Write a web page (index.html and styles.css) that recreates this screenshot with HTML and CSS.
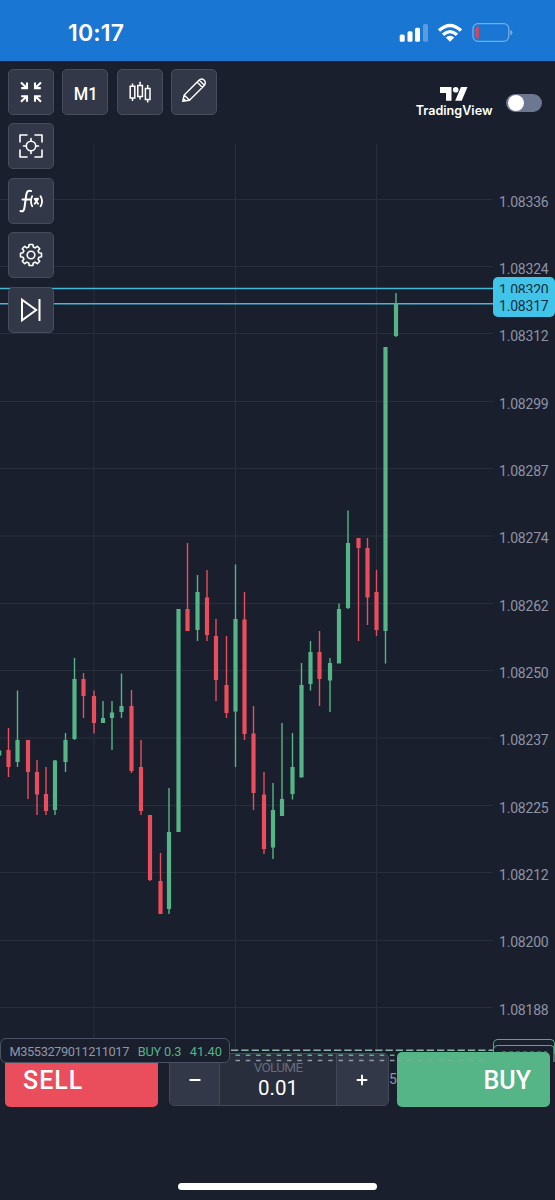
FILE: index.html
```html
<!DOCTYPE html>
<html lang="en">
<head>
<meta charset="utf-8">
<meta name="viewport" content="width=device-width, initial-scale=1">
<title>EURUSD chart</title>
<link rel="stylesheet" href="styles.css">
</head>
<body>
<div class="screen">
  <header class="status">
    <span class="clock">10:17</span>
    <svg class="status-icons" width="120" height="24" viewBox="396 21 120 24">
      <g fill="#fff">
        <rect x="399.700" y="34.500" width="5" height="7.200" rx="1.500"/>
        <rect x="407.500" y="31.300" width="5" height="10.400" rx="1.500"/>
        <rect x="415" y="27.800" width="5" height="13.900" rx="1.500"/>
        <rect x="423" y="24" width="5" height="17.700" rx="1.500" opacity=".28"/>
        <path d="M450 41.700 445.700 37.400Q450 34.100 454.300 37.400Z"/>
      </g>
      <g fill="none" stroke="#fff" stroke-width="3.300">
        <path d="M439 30.500Q450 20.300 461 30.500"/>
        <path d="M443 34.800Q450 28.500 457 34.800"/>
      </g>
      <rect x="473" y="23.700" width="35.800" height="17.600" rx="5" fill="none" stroke="#76ade6" stroke-width="1.300"/>
      <path d="M510.300 30Q512.500 30.600 512.500 32.600T510.300 35.200Z" fill="#76ade6"/>
      <path d="M478.700 26.300V38.700Q475.300 38.500 475.300 35.500V29.500Q475.300 26.500 478.700 26.300Z" fill="#ef3e46"/>
    </svg>
  </header>

  <main class="chart">
    <svg class="plot" width="555" height="1001" viewBox="0 61 555 1001">
      <path class="grid" d="M0 199.500H493M0 266.500H493M0 333.500H493M0 401.500H493M0 468.500H493M0 536H493M0 603.500H493M0 670.500H493M0 738H493M0 805.500H493M0 872.500H493M0 940.500H493M0 1007.500H493M94 144V1052M235.500 144V1052M376.500 144V1052"/>
      <path class="quote" d="M0 288.500H494M0 303.700H494"/>
      <path class="wick up" d="M17.500 690.500V767M55 760V815M65.500 733V772M74.500 658V740M103 701V723M112 701V750M121.500 673.500V718M169 788V914M197.500 575V641M235.500 564.500V767M273 783V859M282 723V816M292.500 733V799.500M301.500 663V777M310.500 641V690.500M330 658V712M339 603.500V663M348 510.500V609M385.500 347V663.500M396 293V337"/>
      <path class="wick down" d="M8.500 728V777M28 740V799M37 760V815M46 767V815M83.500 673V718M94 690.500V733.500M131.500 690V773M141 740V815M150 815V881M160.500 853V914M187.500 543V631M207 570V641M216 619V701M226.500 636V718M244.500 592V740M253.500 706V810M264 772V854M319.500 631V706M358.500 538V641M367.500 538V625M376.500 570V636"/>
      <path class="bar up" d="M-.8 750.500V755.500M17.500 740V762M55 760.500V810M65.500 740V762M74.500 679V739M103 718V723M112 712.500V718M121.500 706V712M169 832V909M178.500 609V832M197.500 592V630M235.500 619V711.500M273 810V847.500M282 799V816M292.500 767V794M301.500 685V777.500M310.500 652V684M330 663V680.500M339 609V663.500M348 543V608M385.500 347V631M396 304V336"/>
      <path class="bar down" d="M8.500 750V767M28 740V772M37 772V794.500M46 794V811M83.500 679V696M94 696V723M131.500 706V771M141 767V811M150 815V880M160.500 881V914M187.500 609V631M207 597.500V635M216 636V680M226.500 685V713M244.500 619.500V734M253.500 733.500V793M264 794.500V849M319.500 652V679M358.500 538V548M367.500 548V597.500M376.500 592V630"/>
    </svg>

    <div class="toolbar">
      <div class="tool-row">
        <button class="tool" aria-label="Collapse">
          <svg width="24" height="24" viewBox="-12 -12 24 24" fill="none" stroke="#fff" stroke-width="2.100"><path d="M-10-9.500-4.300-4M-9.800-3.900H-4V-9.500M10-9.500 4.300-4M9.800-3.900H4V-9.500M-10 9.800-4.300 4.300M-9.800 4.200H-4V9.800M10 9.800 4.300 4.300M9.800 4.200H4V9.800"/></svg>
        </button>
        <button class="tool period"><span>M1</span></button>
        <button class="tool" aria-label="Chart type">
          <svg width="24" height="24" viewBox="-12 -12 24 24" fill="none" stroke="#fff" stroke-width="1.500"><path d="M-9.800-5.800H-5.200V6H-9.800ZM-7.500-8.500V-5.800M-7.500 6V9M-2.200-6.500H2.400V4.500H-2.200ZM.1-10.300V-6.500M.1 4.500V7.500M5.400-3.500H10V7.500H5.400ZM7.700-7V-3.500M7.700 7.500V10.500"/></svg>
        </button>
        <button class="tool" aria-label="Draw">
          <svg class="pencil" width="26" height="26" viewBox="-13 -13 26 26" fill="none" stroke="#fff" stroke-width="1.400" stroke-linejoin="round"><path d="M-11.300 11.200-9.800 5 4.700-9.600Q7.500-12.300 10-9.900T10.300-4.500L-4.500 10.200-11.300 11.200ZM-9.800 5-4.500 10.200M3-8 8.500-2.500M5.100-9.900 10.600-4.400M-10.700 8.600-8.700 10.600"/></svg>
        </button>
      </div>
      <button class="tool" aria-label="Crosshair">
        <svg width="26" height="26" viewBox="-13 -13 26 26" fill="none" stroke="#fff" stroke-width="1.600" stroke-linecap="round" stroke-linejoin="round"><path d="M-11-4V-11H-4M4-11H11V-4M11 4V11H4M-4 11H-11V4M0-7.500V-4.800M0 4.800V7.500M-7.500 0H-4.800M4.800 0H7.500"/><circle r="4.700"/></svg>
      </button>
      <button class="tool" aria-label="Indicators">
        <svg width="26" height="26" viewBox="-13 -13 26 26" fill="none" stroke="#fff" stroke-width="2" stroke-linecap="round"><path d="M0-10Q-3.700-11.500-4.700-6.500L-6.500 6.500Q-7.200 11.500-10.500 10M-8.500-1.500H-1"/><path stroke-width="1.800" d="M1.200-4.800Q-1.200 .2 1.200 5.200M9.600-4.800Q12.600 .2 9.600 5.200M3.700-2 7-2.300M3.700-2 7 2.700M7-2 3.700 2.700"/></svg>
      </button>
      <button class="tool" aria-label="Settings">
        <svg width="26" height="26" viewBox="-13 -13 26 26" fill="none" stroke="#fff" stroke-width="1.600" stroke-linejoin="round"><path d="M-1.800-10.500H1.800L2.400-8Q3.300-7.600 4.100-7.100L6.300-8.700 8.700-6.300 7.100-4.100 8-2.200 10.500-1.800V1.800L8 2.300 7.100 4.100 8.700 6.300 6.300 8.700 4.100 7.100 2.300 8 1.800 10.500H-1.800L-2.300 8-4.100 7.100-6.300 8.700-8.700 6.300-7.100 4.100-8 2.300-10.500 1.800V-1.800L-8-2.300-7.100-4.100-8.700-6.300-6.300-8.700-4.100-7.100-2.300-8Z"/><circle r="3.800"/></svg>
      </button>
      <button class="tool" aria-label="Scroll to latest">
        <svg width="26" height="26" viewBox="-13 -13 26 26" fill="none" stroke="#fff" stroke-width="2"><path d="M-9-10.300V10.300L5.200 0ZM8.500-11V11"/></svg>
      </button>
    </div>

    <div class="brand">
      <div class="brand-name">
        <svg width="28" height="14" viewBox="0 0 28 14" fill="#fff"><path d="M0 0H11.500V13.700H6V6H0Z"/><circle cx="15.700" cy="2.800" r="2.800"/><path d="M21 0H27.500L21.700 13.700H15.200Z"/></svg>
        <span>TradingView</span>
      </div>
      <span class="toggle"></span>
    </div>

    <div class="axis">
      <span>1.08336</span><span>1.08324</span><span>1.08312</span><span>1.08299</span><span>1.08287</span><span>1.08274</span><span>1.08262</span><span>1.08250</span><span>1.08237</span><span>1.08225</span><span>1.08212</span><span>1.08200</span><span>1.08188</span>
    </div>
    <div class="quote-tag ask">1.08320</div>
    <div class="quote-tag bid">1.08317</div>
    <div class="position-tag outer"></div>
    <div class="position-tag inner"></div>
  </main>

  <footer class="trade">
    <button class="sell">SELL</button>
    <div class="stepper">
      <button class="step"><svg width="12" height="12" viewBox="0 0 12 12"><path d="M.5 6H11.500" stroke="#fff" stroke-width="2.200"/></svg></button>
      <div class="volume"><span class="volume-label">VOLUME</span><span class="volume-value">0.01</span></div>
      <button class="step"><svg width="12" height="12" viewBox="0 0 12 12"><path d="M.7 6H11.300M6 .7V11.300" stroke="#fff" stroke-width="1.900"/></svg></button>
    </div>
    <span class="time">5</span>
    <button class="buy">BUY</button>
    <svg class="levels" width="325" height="16" viewBox="230 1047 325 16" fill="none">
      <path d="M231 1050.300H493" stroke="#8fb3ab" stroke-width="1.600" stroke-dasharray="7.300 3"/>
      <path d="M235.500 1055.300H397" stroke="#55b586" stroke-width="1.500" stroke-dasharray="4.500 5.800"/>
      <path d="M235.500 1060.500H397" stroke="#9298a5" stroke-width="1.400" stroke-dasharray="4.500 5.800"/>
      <path d="M397 1060.500H490" stroke="#72b78e" stroke-width="1.200" stroke-dasharray="4.500 5.800"/>
      <path d="M502 1051.800H547" stroke="#43906f" stroke-dasharray="4 3"/>
      <path d="M554 1047V1062" stroke="#55a884" stroke-width="1.300"/>
    </svg>
    <div class="order"><span class="order-id">M3553279011211017</span><span class="order-side">BUY 0.3</span><span class="order-profit">41.40</span></div>
  </footer>
  <div class="home"></div>
</div>
</body>
</html>
```
FILE: styles.css
```css
* { box-sizing: border-box; }
body { margin: 0; background: #1a1f2d; font-family: Roboto, "Liberation Sans", sans-serif; }
button { margin: 0; padding: 0; border: 0; color: #fff; font: inherit; }
svg { display: block; flex: none; }
.screen { width: 555px; height: 1200px; display: flex; flex-direction: column; overflow: hidden; background: #1a1f2d; }

.status { flex: none; height: 61px; padding: 4px 39px 0 68px; display: flex; align-items: center; justify-content: space-between; background: #1976d3; }
.clock { font: 600 23px/28px Inter, sans-serif; color: #fff; letter-spacing: .2px; padding-top: 1px; }

.chart { flex: none; position: relative; height: 991px; }
.plot { position: absolute; top: 0; left: 0; }
.grid { fill: none; stroke: #292e3b; stroke-width: 1; }
.quote { fill: none; stroke: #43b8d7; stroke-width: 1.4; }
.wick { fill: none; stroke-width: 1.4; }
.bar { fill: none; stroke-width: 4.2; }
.up { stroke: #55b586; }
.down { stroke: #ea4d5c; }

.toolbar { position: absolute; top: 8px; left: 8px; display: flex; flex-direction: column; gap: 8.4px; }
.tool-row { display: flex; gap: 8.4px; }
.tool { width: 46px; height: 46px; display: flex; align-items: center; justify-content: center; background: #323847; border: 1.5px solid #474d5b; border-radius: 5px; }
.period { font-size: 19px; font-weight: 500; padding-top: 2px; }
.period span { transform: scaleX(.87); }
.pencil { margin-top: -4px; }

.brand { position: absolute; top: 26px; right: 13px; display: flex; align-items: flex-start; gap: 13.5px; }
.brand-name { display: flex; flex-direction: column; align-items: center; color: #fff; font: 600 12.6px/16px Inter, sans-serif; }
.brand-name span { margin-top: 2px; }
.toggle { width: 36px; height: 18px; margin-top: 6.5px; border-radius: 9px; padding: 1px 2px; background: #6e7790; }
.toggle::before { content: ""; display: block; width: 16px; height: 16px; border-radius: 50%; background: #fff; }

.axis { position: absolute; top: 105.5px; left: 499px; display: flex; flex-direction: column; color: #8e93a5; font-size: 14px; letter-spacing: -.2px; }
.axis span { height: 67.35px; line-height: 70px; }
.quote-tag { position: absolute; left: 493px; width: 62px; padding-left: 6px; overflow: hidden; background: #41c4ea; color: #162c3a; font-size: 14px; letter-spacing: -.2px; border-radius: 5px; }
.ask { top: 216px; height: 26px; line-height: 27px; }
.bid { top: 232px; height: 24px; line-height: 27px; }
.position-tag { position: absolute; left: 493px; width: 61.5px; border: 1.5px solid #55a884; border-bottom: 0; border-radius: 5px 5px 0 0; }
.outer { top: 978px; height: 14px; }
.inner { top: 984px; height: 9px; }

.trade { flex: none; position: relative; height: 55px; padding: 0 5px; display: flex; align-items: stretch; }
.sell, .buy { width: 153px; border-radius: 5px; padding: 3px 19px 0; font-size: 25px; font-weight: 500; line-height: 52px; }
.sell { background: #ea4d5c; text-align: left; padding-left: 18px; letter-spacing: 1px; }
.buy { background: #55b586; text-align: right; }
.stepper { width: 220px; height: 53px; margin: 1px 0 0 11px; display: flex; background: #282e3c; border: 1px solid #424958; border-radius: 5px; overflow: hidden; }
.step { width: 50px; display: flex; align-items: center; justify-content: center; background: #323847; border-right: 1px solid #424958; }
.step:last-child { width: 52px; padding-right: 2px; border-right: 0; border-left: 1px solid #424958; }
.volume { flex: 1; display: flex; flex-direction: column; align-items: center; }
.volume-label { height: 20px; line-height: 27px; font-size: 13.5px; letter-spacing: -.7px; color: #656b7c; }
.volume-value { font-size: 20.5px; line-height: 29px; color: #fff; }
.time { width: 8px; color: #8e93a5; font-size: 14px; line-height: 54px; }
.levels { position: absolute; left: 230px; top: -5px; }
.order { position: absolute; left: 0; top: -14px; width: 230px; height: 25px; padding: 2px 7px 0 8.5px; display: flex; justify-content: space-between; background: #1a1f2d; border: 1.5px solid #4b5263; border-radius: 6px; font-size: 12.8px; line-height: 22px; color: #9196a7; white-space: nowrap; }
.order-id { letter-spacing: -.4px; }
.order-side { color: #55b586; letter-spacing: -.2px; }
.order-profit { color: #55b586; }

.home { width: 199px; height: 7px; margin: 76px 0 0 178px; border-radius: 4px; background: #fff; }
```
